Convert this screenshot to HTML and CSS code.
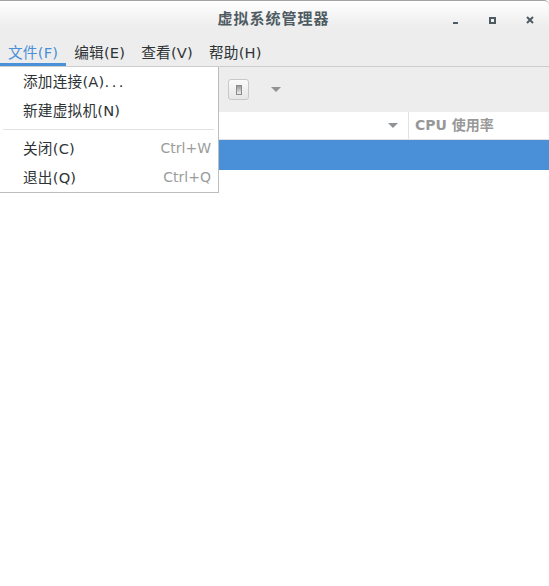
FILE: index.html
```html
<!DOCTYPE html>
<html>

<head>
    <title>虚拟系统管理器</title>
    <link rel="stylesheet" href="styles.css">
</head>

<body>
    <div class="window">
        <div class="titlebar">
            <span class="title">虚拟系统管理器</span>
            <div class="window-buttons">
                <span class="win-min"></span>
                <span class="win-max"></span>
                <svg class="win-close" width="8" height="8" viewBox="0 0 8 8">
                    <path d="M1 1L7 7M7 1L1 7" stroke="#4f5b62" stroke-width="2" fill="none" />
                </svg>
            </div>
        </div>

        <div class="menubar">
            <span class="menu-item active">文件(F)</span>
            <span class="menu-item">编辑(E)</span>
            <span class="menu-item">查看(V)</span>
            <span class="menu-item">帮助(H)</span>
        </div>

        <div class="toolbar">
            <div class="tool-button"><span class="tool-icon"></span></div>
            <span class="arrow tool-arrow"></span>
        </div>

        <div class="list-header">
            <div class="col-name"><span class="arrow"></span></div>
            <div class="col-cpu">CPU 使用率</div>
        </div>
        <div class="list-row"></div>
    </div>

    <div class="dropdown">
        <div class="dropdown-item"><span>添加连接(A)<span class="dots">...</span></span></div>
        <div class="dropdown-item"><span>新建虚拟机(N)</span></div>
        <div class="separator"></div>
        <div class="dropdown-item"><span>关闭(C)</span><span class="shortcut">Ctrl+W</span></div>
        <div class="dropdown-item"><span>退出(Q)</span><span class="shortcut">Ctrl+Q</span></div>
    </div>
</body>

</html>
```

FILE: styles.css
```css
html,
body {
    margin: 0;
    height: 100%;
    background-color: #fff;
}

body {
    font-family: "DejaVu Sans", "Noto Sans CJK SC", sans-serif;
    font-size: 14.67px;
    letter-spacing: 0.2px;
    color: #2e3436;
    overflow: hidden;
}

.titlebar {
    height: 41px;
    box-sizing: border-box;
    border-top: 1px solid #a3a3a3;
    border-top-right-radius: 5px;
    background: linear-gradient(#fff, #ededed 26px);
    display: flex;
    justify-content: center;
    position: relative;
}

.title {
    font-family: "Noto Sans CJK SC", sans-serif;
    font-weight: bold;
    font-size: 15px;
    letter-spacing: 1px;
    line-height: 33px;
    margin-right: 2px;
    color: #4f5b62;
}

.window-buttons {
    position: absolute;
    top: 0;
    right: 0;
    height: 38px;
    display: flex;
    align-items: center;
}

.win-min {
    width: 5px;
    height: 2px;
    margin-top: 6px;
    margin-right: 31px;
    background-color: #4f5b62;
}

.win-max {
    width: 3px;
    height: 3px;
    border: 2px solid #4f5b62;
    margin-right: 30px;
}

.win-close {
    margin-right: 15px;
}

.menubar {
    height: 25px;
    background-color: #ededed;
    border-bottom: 1px solid #cdcdcd;
    display: flex;
}

.menu-item {
    padding: 0 8px;
    line-height: 24px;
    color: #2e3436;
}

.menu-item.active {
    color: #4a90d9;
    border-bottom: 3px solid #4a90d9;
    height: 22px;
}

.toolbar {
    height: 45px;
    background-color: #ededed;
    display: flex;
    align-items: center;
    padding-left: 228px;
}

.tool-button {
    width: 19px;
    height: 19px;
    border: 1px solid #c8c8c8;
    border-radius: 3px;
    background: linear-gradient(#fafafa, #e6e6e6);
    display: flex;
    align-items: center;
    justify-content: center;
}

.tool-icon {
    width: 4px;
    height: 8px;
    border: 1px solid #8a8a8a;
    background: linear-gradient(#999, #eee);
}

.arrow {
    width: 0;
    height: 0;
    border-left: 5px solid transparent;
    border-right: 5px solid transparent;
    border-top: 5px solid #8f9396;
}

.tool-arrow {
    margin-left: 22px;
}

.list-header {
    height: 28px;
    box-sizing: border-box;
    border-bottom: 1px solid #e2e2e2;
    display: flex;
}

.col-name {
    width: 409px;
    box-sizing: border-box;
    border-right: 1px solid #e2e2e2;
    display: flex;
    align-items: center;
    justify-content: flex-end;
    padding-right: 10px;
}

.col-cpu {
    padding-left: 6px;
    font-size: 14px;
    letter-spacing: 0;
    line-height: 26px;
    font-weight: bold;
    color: #989898;
}

.list-row {
    height: 30px;
    background-color: #4a90d9;
}

.dropdown {
    position: absolute;
    top: 67px;
    left: 0;
    width: 219px;
    height: 126px;
    box-sizing: border-box;
    background-color: #fff;
    border-right: 1px solid #bdbdbd;
    border-bottom: 1px solid #bdbdbd;
}

.dropdown-item {
    height: 29px;
    box-sizing: border-box;
    padding: 0 7px 2px 23px;
    display: flex;
    justify-content: space-between;
    align-items: center;
    color: #2e3436;
}

.dots {
    letter-spacing: 2.5px;
}

.separator {
    height: 1px;
    margin: 4px 4px 4px 3px;
    background-color: #e2e2e2;
}

.shortcut {
    font-size: 14px;
    letter-spacing: 0;
    color: #9a9c9c;
}
```
